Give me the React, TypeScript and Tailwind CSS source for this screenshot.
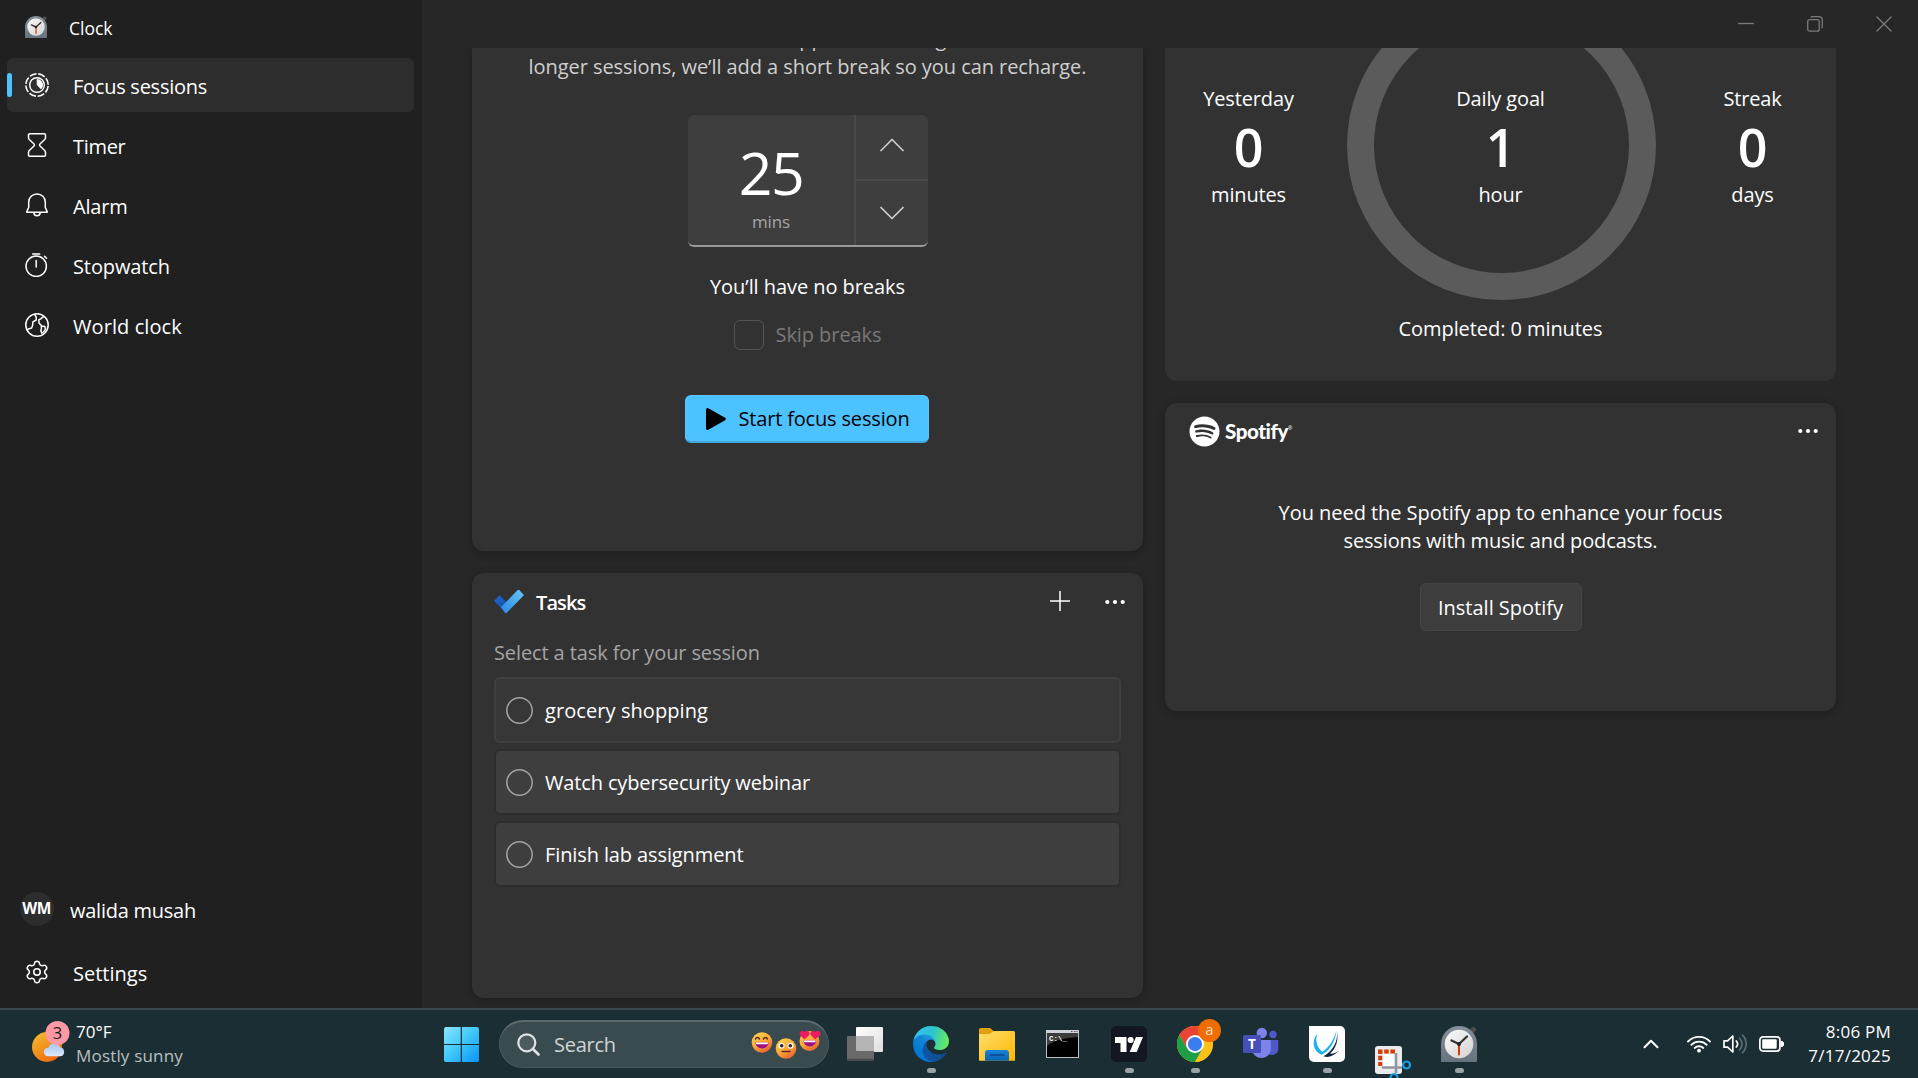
import React from 'react';
import { Settings, ChevronUp } from 'lucide-react';
import { FaSpotify } from 'react-icons/fa';

/* ---------- icons ---------- */

function ClockAppIcon({ size }: { size: number }) {
  return (
    <svg width={size} height={size} viewBox="0 0 36 36">
      <defs>
        <linearGradient id="clkBody" x1="0" y1="0" x2="0" y2="1">
          <stop offset="0" stopColor="#85909b" />
          <stop offset="1" stopColor="#66727d" />
        </linearGradient>
        <linearGradient id="clkFace" x1="0" y1="0" x2="1" y2="1">
          <stop offset="0" stopColor="#fafafa" />
          <stop offset="1" stopColor="#d2d2d2" />
        </linearGradient>
      </defs>
      <rect x="29.500" y="1" width="5" height="6" rx="1" transform="rotate(45 32 4)" fill="#4c4c4c" />
      <path d="M0 36V18a18 18 0 0 1 36 0v16.500a1.500 1.500 0 0 1-1.500 1.500z" fill="url(#clkBody)" />
      <circle cx="18" cy="18" r="14.300" fill="url(#clkFace)" />
      <path d="M18 18v10.500" stroke="#d83b01" strokeWidth="2" strokeLinecap="round" />
      <path d="M18 18l-7.500-3.500M18 18l8-7.500" stroke="#333" strokeWidth="2.300" strokeLinecap="round" />
      <circle cx="18" cy="18" r="2" fill="#222" />
    </svg>
  );
}

function FocusIcon() {
  return (
    <svg width="24" height="24" viewBox="0 0 24 24" fill="none" stroke="#fff">
      <circle cx="12" cy="12" r="11.200" strokeWidth="1.600" strokeDasharray="7 1.796" strokeDashoffset="-1" />
      <circle cx="12" cy="12" r="7.300" strokeWidth="1.400" />
      <path d="M12 6.300a5.700 5.700 0 0 1 4 9.800L12 12z" fill="#fff" strokeWidth="0.600" />
    </svg>
  );
}

function TimerIcon() {
  return (
    <svg width="24" height="24" viewBox="0 0 24 24" fill="none" stroke="#fff" strokeWidth="1.500" strokeLinejoin="round">
      <path d="M4.800.750h14.400a1.300 1.300 0 0 1 1.300 1.300v2.600c0 .8-.3 1.400-.8 1.900L15 11a1.400 1.400 0 0 0 0 2l4.700 4.500c.5.500.8 1.100.8 1.900V22a1.300 1.300 0 0 1-1.300 1.300H4.800A1.300 1.300 0 0 1 3.500 22v-2.600c0-.8.3-1.400.8-1.900L9 13a1.400 1.400 0 0 0 0-2L4.300 6.550c-.5-.5-.8-1.100-.8-1.900v-2.600A1.300 1.300 0 0 1 4.800.750z" />
    </svg>
  );
}

function AlarmIcon() {
  return (
    <svg width="24" height="24" viewBox="0 0 24 24" fill="none" stroke="#fff" strokeWidth="1.500" strokeLinejoin="round">
      <path d="M12 .9a8.300 8.300 0 0 0-8.300 8.300v5.300L1.800 18.600a.500.500 0 0 0 .4.700h19.600a.500.500 0 0 0 .4-.7l-1.900-4.100V9.200A8.300 8.300 0 0 0 12 .9z" />
      <path d="M8.800 19.500a3.200 3.200 0 0 0 6.400 0" />
    </svg>
  );
}

function StopwatchIcon() {
  return (
    <svg width="24" height="24" viewBox="0 0 24 24" fill="none" stroke="#fff" strokeWidth="1.500" strokeLinecap="round">
      <circle cx="11.200" cy="13.200" r="10.200" />
      <path d="M11.200 7.500v6.500M7.700 .9h7M19.500 3.300l2 2" />
    </svg>
  );
}

function WorldIcon() {
  return (
    <svg width="24" height="24" viewBox="0 0 24 24" fill="none" stroke="#fff" strokeWidth="1.500" strokeLinejoin="round">
      <circle cx="12" cy="12" r="11.200" />
      <path d="M9.500 1.200l1.700 2.800v3L7.900 8.900l-.3 3.600-1 2.500-3 .9-1.600 1.500" />
      <path d="M18.800 3.300L16 5.600l-2.200 1.400.2 3 2.300 2.500.2 3-.7 2.200 1 2.500 2.200-1.900 1.500-2.500-.7-2.300-2.500-.6" />
    </svg>
  );
}

function TodoIcon() {
  return (
    <svg width="30" height="25" viewBox="0 0 30 25">
      <defs>
        <linearGradient id="todoL" x1="0" y1="0" x2="1" y2="1">
          <stop offset="0" stopColor="#2564cf" />
          <stop offset="1" stopColor="#124fac" />
        </linearGradient>
        <linearGradient id="todoR" x1="0" y1="1" x2="1" y2="0">
          <stop offset="0" stopColor="#2987e6" />
          <stop offset="1" stopColor="#64c6f6" />
        </linearGradient>
      </defs>
      <path d="M.5 11.300L4.900 6.900a1 1 0 0 1 1.400 0l6 6-5.500 5.600L.5 12.500a.9.900 0 0 1 0-1.200z" fill="url(#todoL)" />
      <path d="M6.800 18.300L23.700 1a1.100 1.100 0 0 1 1.500 0l4.200 4.400a1 1 0 0 1 0 1.400L12.600 24a1 1 0 0 1-1.400 0z" fill="url(#todoR)" />
    </svg>
  );
}

function Dots() {
  return (
    <svg width="22" height="6" viewBox="0 0 22 6" fill="#fff">
      <circle cx="3.300" cy="3" r="2.100" />
      <circle cx="11" cy="3" r="2.100" />
      <circle cx="18.700" cy="3" r="2.100" />
    </svg>
  );
}

function TaskCircle() {
  return (
    <svg width="27" height="27" viewBox="0 0 27 27">
      <circle cx="13.500" cy="13.500" r="12.700" fill="none" stroke="#a3a3a3" strokeWidth="1.500" />
    </svg>
  );
}

function EdgeIcon() {
  return (
    <svg width="36" height="36" viewBox="0 0 256 256">
      <defs>
        <linearGradient id="edA" x1="63" y1="177" x2="242" y2="177" gradientUnits="userSpaceOnUse">
          <stop offset="0" stopColor="#0c59a4" />
          <stop offset="1" stopColor="#114a8b" />
        </linearGradient>
        <linearGradient id="edB" x1="157" y1="100" x2="46" y2="221" gradientUnits="userSpaceOnUse">
          <stop offset="0" stopColor="#1b9de2" />
          <stop offset=".35" stopColor="#1384d9" />
          <stop offset="1" stopColor="#0078d4" />
        </linearGradient>
        <linearGradient id="edC" x1="20" y1="50" x2="250" y2="110" gradientUnits="userSpaceOnUse">
          <stop offset="0" stopColor="#35c1f1" />
          <stop offset=".5" stopColor="#2cc4cf" />
          <stop offset="1" stopColor="#66eb5e" />
        </linearGradient>
      </defs>
      <g transform="translate(-4.630 -4.920)">
        <path fill="url(#edA)" d="M235.680 195.460a93.730 93.730 0 0 1-10.540 4.710 101.870 101.870 0 0 1-35.900 6.460c-47.320 0-88.540-32.550-88.540-74.320A31.480 31.480 0 0 1 117.130 105c-42.800 1.800-53.800 46.400-53.800 72.530 0 73.880 68.090 81.370 82.760 81.370 7.910 0 19.840-2.300 27-4.560l1.310-.44a128.340 128.340 0 0 0 66.600-52.800 4 4 0 0 0-5.320-5.640z" />
        <path fill="url(#edB)" d="M110.340 246.340A79.200 79.200 0 0 1 87.600 225a80.720 80.720 0 0 1 29.530-120c3.120-1.470 8.450-4.130 15.540-4a32.350 32.350 0 0 1 25.690 13 31.880 31.880 0 0 1 6.360 18.660c0-.21 24.460-79.600-80-79.600-43.900 0-80 41.660-80 78.210a130.150 130.150 0 0 0 12.110 56 128 128 0 0 0 156.380 67.110 75.550 75.550 0 0 1-62.780-8z" />
        <path fill="url(#edC)" d="M156.940 153.780c-.81 1.050-3.300 2.500-3.300 5.660 0 2.610 1.700 5.120 4.720 7.230 14.380 10 41.490 8.680 41.560 8.680a59.560 59.560 0 0 0 30.270-8.350 61.380 61.380 0 0 0 30.430-52.880c.26-22.410-8-37.310-11.340-43.910C228.090 28.760 182.350 4.920 132.610 4.920a128 128 0 0 0-128 126.200c.48-36.540 36.800-66.050 80-66.050 3.500 0 23.460.34 42 10.070 16.340 8.580 24.900 18.940 30.850 29.210 6.180 10.670 7.280 24.150 7.280 29.520s-2.740 13.330-7.800 19.910z" />
      </g>
    </svg>
  );
}

function TaskViewIcon() {
  return (
    <svg width="36" height="36" viewBox="0 0 36 36">
      <defs>
        <linearGradient id="tvW" x1="0" y1="0" x2="1" y2="1">
          <stop offset="0" stopColor="#fff" />
          <stop offset="1" stopColor="#dedede" />
        </linearGradient>
      </defs>
      <rect x="9" y="1" width="27" height="25" rx="1" fill="url(#tvW)" />
      <rect x="0" y="10" width="27" height="24.500" rx="1" fill="#6a6a6a" />
      <path d="M9 10h18v15H10a1 1 0 0 1-1-1z" fill="#b4b4b4" />
      <path d="M0 33.500h27" stroke="#4d4d4d" strokeWidth="1.500" />
    </svg>
  );
}

function FolderIcon() {
  return (
    <svg width="36" height="36" viewBox="0 0 36 36">
      <defs>
        <linearGradient id="fo" x1="0" y1="0" x2="1" y2="1">
          <stop offset="0" stopColor="#ffdc70" />
          <stop offset="1" stopColor="#ffb900" />
        </linearGradient>
        <linearGradient id="fb" x1="0" y1="0" x2="0" y2="1">
          <stop offset="0" stopColor="#1585dc" />
          <stop offset="1" stopColor="#0b62b0" />
        </linearGradient>
      </defs>
      <path d="M0 3.500A1.500 1.500 0 0 1 1.500 2h9.700l4 3.500L12 10H0z" fill="#e2a10b" />
      <path d="M0 8h10.500l4.500-3h19.500A1.500 1.500 0 0 1 36 6.500V34.700H0z" fill="url(#fo)" />
      <path d="M6 34.700V27a3 3 0 0 1 3-3h18a3 3 0 0 1 3 3v7.700z" fill="url(#fb)" />
      <path d="M11 29h14" stroke="#0a4a8c" strokeWidth="1.300" strokeLinecap="round" />
    </svg>
  );
}

function CmdIcon() {
  return (
    <svg width="33" height="28" viewBox="0 0 33 28">
      <rect x=".5" y=".5" width="32" height="27" fill="#000" stroke="#b9bcc1" />
      <rect x="0" y="0" width="33" height="3" fill="#cfd2d8" />
      <path d="M1 3h31v4C18 8 8 10 1 16z" fill="#3c3c3c" />
      <path d="M25 1.500h1.500M28 1.500h1.500M30.500 1.500h1" stroke="#556" strokeWidth="1" />
      <text x="3" y="10.500" fontSize="7.500" fontFamily="Liberation Mono, monospace" fontWeight="700" fill="#fff">C:\_</text>
    </svg>
  );
}

function TradingIcon() {
  return (
    <svg width="36" height="36" viewBox="0 0 36 36">
      <rect width="36" height="36" rx="5.500" fill="#131722" />
      <path d="M4 11h11.500v15h-6v-9H4z" fill="#fff" />
      <circle cx="19.600" cy="14" r="3" fill="#fff" />
      <path d="M25 11h7l-6.300 15h-7z" fill="#fff" />
    </svg>
  );
}

function ChromeIcon() {
  return (
    <svg width="36" height="36" viewBox="0 0 48 48">
      <circle cx="24" cy="24" r="24" fill="#fbc116" />
      <path d="M24 24L44.780 12A24 24 0 0 0 3.220 12L13.600 30z" fill="#ea4335" />
      <path d="M3.220 12A24 24 0 0 0 24 48L34.400 30H13.600z" fill="#1e9e47" />
      <path d="M24 13h21.300A24 24 0 0 1 24 48l10.400-18z" fill="#fbc116" />
      <circle cx="24" cy="24" r="12" fill="#fff" />
      <circle cx="24" cy="24" r="9.500" fill="#3b7ded" />
    </svg>
  );
}

function TeamsIcon() {
  return (
    <svg width="36" height="36" viewBox="0 0 36 36">
      <circle cx="30" cy="8.500" r="3.700" fill="#5059c9" />
      <path d="M24 14h10.300a1 1 0 0 1 1 1v8a6.300 6.300 0 0 1-11.300 3.500z" fill="#5059c9" />
      <circle cx="18.800" cy="7" r="5.200" fill="#7b83eb" />
      <path d="M10.500 14h16a1.300 1.300 0 0 1 1.300 1.300V24.500a9.500 9.500 0 0 1-18.600 0V15.300z" fill="#7b83eb" />
      <rect x="0" y="9" width="18" height="18" rx="1.500" fill="#464eb8" />
      <text x="9" y="22.500" textAnchor="middle" fontSize="13.500" fontWeight="700" fontFamily="Open Sans, sans-serif" fill="#fff">T</text>
    </svg>
  );
}

function SwooshIcon() {
  return (
    <svg width="36" height="36" viewBox="0 0 36 36">
      <path d="M0 0h31a5 5 0 0 1 5 5v26a5 5 0 0 1-5 5H5a5 5 0 0 1-5-5z" fill="#fff" />
      <path d="M8.300 7.500C2.500 14.500 3.500 25 12.500 28.700 19.500 26 26.500 16 27.500 4.500 24.500 14.500 19.500 22 13.300 25.800 7.800 21.500 6 14.500 8.300 7.500z" fill="#19b1ee" />
      <path d="M28 6c1 8.500-3.500 18.500-13.500 24.300 4.500 1.700 10.500 0 15.500-5.800-3.500 2.700-6.500 3.500-9 3C27 22.500 29.700 14 28 6z" fill="#12284b" />
    </svg>
  );
}

function SnipIcon() {
  return (
    <svg width="36" height="36" viewBox="0 0 36 36">
      <rect x="0" y="0" width="27" height="28" rx="3" fill="#e9ebee" />
      <path d="M3 5.500h17M5.200 3.500V20" stroke="#d83b01" strokeWidth="4" strokeDasharray="4.500 1.700" />
      <rect x="8" y="8.500" width="13" height="12.500" fill="#fff" />
      <path d="M21 7v20M7 21.500h20" stroke="#8f969e" strokeWidth="2.600" />
      <circle cx="31.500" cy="19" r="3.500" fill="none" stroke="#1b9de2" strokeWidth="2.200" />
      <circle cx="19" cy="31.500" r="3.500" fill="none" stroke="#1b9de2" strokeWidth="2.200" />
    </svg>
  );
}

function WindowsIcon() {
  return (
    <svg width="35" height="35" viewBox="0 0 35 35">
      <defs>
        <linearGradient id="wn" x1="0" y1="0" x2="1" y2="1">
          <stop offset="0" stopColor="#8fe4ff" />
          <stop offset=".45" stopColor="#43cbfb" />
          <stop offset="1" stopColor="#0a93f5" />
        </linearGradient>
        <mask id="wnm">
          <rect width="35" height="35" rx="1.500" fill="#fff" />
          <path d="M17.300 0v35M0 17.500h35" stroke="#000" strokeWidth="1.200" />
        </mask>
      </defs>
      <rect width="35" height="35" rx="1.500" fill="url(#wn)" mask="url(#wnm)" />
    </svg>
  );
}

function WeatherIcon() {
  return (
    <svg width="38" height="42" viewBox="0 0 38 42">
      <defs>
        <linearGradient id="sun" x1="0" y1="0" x2=".7" y2="1">
          <stop offset="0" stopColor="#f5c231" />
          <stop offset="1" stopColor="#f0680e" />
        </linearGradient>
        <linearGradient id="cl" x1="0" y1="0" x2="0" y2="1">
          <stop offset="0" stopColor="#a9c5f5" />
          <stop offset="1" stopColor="#dbe7fb" />
        </linearGradient>
      </defs>
      <circle cx="15" cy="26" r="15" fill="url(#sun)" />
      <path d="M16 35.300a4.300 4.300 0 0 1 .3-8.600 6.300 6.300 0 0 1 11.700-.4 4.600 4.600 0 0 1 .8 9z" fill="url(#cl)" />
      <circle cx="25.500" cy="12" r="12" fill="#ff99a4" />
      <text x="25.500" y="17.500" textAnchor="middle" fontSize="16.500" fontFamily="Open Sans, sans-serif" fill="#1a1a1a">3</text>
    </svg>
  );
}

function Emojis() {
  return (
    <svg width="70" height="30" viewBox="0 0 70 30">
      <defs>
        <linearGradient id="emo" x1="0" y1="0" x2=".6" y2="1">
          <stop offset="0" stopColor="#ffd84a" />
          <stop offset=".6" stopColor="#fba638" />
          <stop offset="1" stopColor="#e8682f" />
        </linearGradient>
      </defs>
      <circle cx="11" cy="12.500" r="10.300" fill="url(#emo)" />
      <path d="M4.500 9c.7-2 3.300-2 4 0M12.500 9c.7-2 3.300-2 4 0" fill="none" stroke="#5b2b23" strokeWidth="1.500" strokeLinecap="round" />
      <path d="M4.500 12.500h13a6.500 6 0 0 1-13 0z" fill="#9c0f86" />
      <path d="M5 12.500h12v1a1 1 0 0 1-1 .7H6a1 1 0 0 1-1-.7z" fill="#fff" />
      <circle cx="35" cy="18.500" r="10.300" fill="url(#emo)" />
      <circle cx="30.500" cy="15.700" r="3" fill="#fff" />
      <circle cx="39.500" cy="15.700" r="3" fill="#fff" />
      <circle cx="30.700" cy="15.800" r="1.800" fill="#3b2020" />
      <circle cx="39.300" cy="15.800" r="1.800" fill="#3b2020" />
      <path d="M31 21.500h8" stroke="#5b2b23" strokeWidth="1.400" strokeLinecap="round" />
      <circle cx="58.500" cy="11" r="10" fill="url(#emo)" />
      <path d="M52.500 10.500h12.500a6.200 6 0 0 1-12.500 0z" fill="#9c0f86" />
      <path d="M53 10.500h11.500v1a1 1 0 0 1-1 .7H54a1 1 0 0 1-1-.7z" fill="#fff" />
      <path d="M53.500 9.500l-4.200-4a2.700 2.700 0 0 1 3.300-4.200l1 .7.900-.8a2.700 2.700 0 0 1 3.500 4z" fill="#ee1c63" />
      <path d="M64 9.500l-4-4.300a2.700 2.700 0 0 1 3.500-4l.9.800 1-.7a2.700 2.700 0 0 1 3.300 4.200z" fill="#ee1c63" />
    </svg>
  );
}

/* ---------- pieces ---------- */

const NAV = [
  { label: 'Focus sessions', icon: <FocusIcon />, active: true, tracking: 'tracking-[-0.260px]' },
  { label: 'Timer', icon: <TimerIcon />, active: false, tracking: 'tracking-[-0.300px]' },
  { label: 'Alarm', icon: <AlarmIcon />, active: false, tracking: 'tracking-[-0.200px]' },
  { label: 'Stopwatch', icon: <StopwatchIcon />, active: false, tracking: 'tracking-[-0.110px]' },
  { label: 'World clock', icon: <WorldIcon />, active: false, tracking: 'tracking-[0.080px]' },
];

function Sidebar() {
  return (
    <aside className="flex w-[422px] shrink-0 flex-col bg-[#202020]">
      <header className="flex h-[54px] items-center gap-[22px] pl-[25px]">
        <ClockAppIcon size={22} />
        <span className="pt-[1px] text-[17.500px] leading-6">Clock</span>
      </header>
      <nav className="mt-1 flex flex-col gap-1.5 pr-2 pl-[7px]">
        {NAV.map((n) => (
          <div key={n.label} className={n.active ? 'flex h-[54px] items-center rounded-md bg-[#2d2d2d]' : 'flex h-[54px] items-center'}>
            <span className={n.active ? 'h-6 w-[5px] rounded-full bg-[#4cc2ff]' : 'w-[5px]'} />
            <span className="ml-[13px]">{n.icon}</span>
            <span className={`${n.tracking} ml-6 pt-[3px] leading-7`}>{n.label}</span>
          </div>
        ))}
      </nav>
      <div className="mt-auto flex h-[54px] items-center pl-5">
        <span className="flex size-[34px] items-center justify-center rounded-full bg-[#2d2d2d] pr-[1px] text-[15.500px] font-bold tracking-[-0.600px]">WM</span>
        <span className="ml-4 pt-[3px] leading-7 tracking-[-0.250px]">walida musah</span>
      </div>
      <div className="mt-[9px] mb-[9px] flex h-[54px] items-center pl-6">
        <Settings size={26} strokeWidth={1.400} />
        <span className="ml-[23px] pt-[3px] leading-7">Settings</span>
      </div>
    </aside>
  );
}

function FocusCard() {
  return (
    <section className="flex h-[503px] flex-col items-center overflow-hidden rounded-b-xl bg-[#323232] shadow-[0_2px_8px_rgba(0,0,0,0.250)]">
      <p className="mt-[-23px] text-center leading-7 tracking-[-0.060px] whitespace-nowrap text-[#cfcfcf]">
        We’ll turn off notifications and app alerts during each session. For
        <br />
        longer sessions, we’ll add a short break so you can recharge.
      </p>
      <div className="mt-[34px] flex h-[132px] w-60 shrink-0 overflow-hidden rounded-md border-b-2 border-[#9a9a9a] bg-[#3e3e3e]">
        <div className="flex w-[166px] flex-col items-center pt-[25px] pl-[1px]">
          <span className="text-[59px] leading-[64px] tracking-[-1.500px]">25</span>
          <span className="mt-[6px] text-[17px] leading-6 tracking-[-0.140px] text-[#a6a6a6]">mins</span>
        </div>
        <div className="flex flex-1 flex-col border-l-2 border-[#4a4a4a]">
          <div className="flex h-[66px] items-center justify-center border-b-2 border-[#4a4a4a] pb-[4px]">
            <svg width="24" height="14" viewBox="0 0 24 14" fill="none" stroke="#cfcfcf" strokeWidth="1.700" strokeLinecap="round" strokeLinejoin="round">
              <path d="M1 12.500L12 1.500l11 11" />
            </svg>
          </div>
          <div className="flex flex-1 items-center justify-center">
            <svg width="24" height="14" viewBox="0 0 24 14" fill="none" stroke="#cfcfcf" strokeWidth="1.700" strokeLinecap="round" strokeLinejoin="round">
              <path d="M1 1.500l11 11 11-11" />
            </svg>
          </div>
        </div>
      </div>
      <div className="mt-[26px] leading-7 tracking-[-0.060px]">You’ll have no breaks</div>
      <label className="mt-[19px] flex h-[30px] items-center gap-3 text-[#797979]">
        <span className="size-[30px] rounded-md border border-[#545454]" />
        <span className="leading-7 tracking-[-0.070px]">Skip breaks</span>
      </label>
      <button className="mt-[45px] mr-[2px] flex h-12 w-[244px] shrink-0 items-center rounded-md border border-b-2 border-[#5ac7ff] border-b-[#42a7dc] bg-[#4cc2ff] pl-5 text-black">
        <svg width="20" height="22" viewBox="0 0 20 22">
          <path d="M0 1.500A1.500 1.500 0 0 1 2.300.3l16.800 9.400a1.500 1.500 0 0 1 0 2.600L2.300 21.700A1.500 1.500 0 0 1 0 20.500z" />
        </svg>
        <span className="ml-[13px] leading-7 tracking-[-0.170px]">Start focus session</span>
      </button>
    </section>
  );
}

const TASKS = [
  { title: 'Watch cybersecurity webinar', tracking: 'tracking-[-0.140px]' },
  { title: 'Finish lab assignment', tracking: 'tracking-[-0.110px]' },
];

function TasksCard() {
  return (
    <section className="mt-[22px] h-[425px] rounded-xl bg-[#323232] pt-[11px] pr-[17px] pl-[22px] shadow-[0_2px_8px_rgba(0,0,0,0.250)]">
      <header className="flex h-[34px] items-center">
        <TodoIcon />
        <span className="ml-3 pt-[3px] font-semibold leading-7 tracking-[-0.900px]">Tasks</span>
        <svg className="ml-auto" width="20" height="20" viewBox="0 0 20 20" stroke="#fff" strokeWidth="1.500">
          <path d="M10 0v20M0 10h20" />
        </svg>
        <span className="ml-[34px] pt-[1px]">
          <Dots />
        </span>
      </header>
      <p className="mt-[21px] leading-7 tracking-[-0.110px] text-[#a4a4a4]">Select a task for your session</p>
      <div className="mt-[10px] mr-[5px] flex h-[66px] items-center rounded-md border-2 border-[#3f3f3f] bg-[#373737] pl-[10px]">
        <TaskCircle />
        <span className="ml-3 pt-[1px] leading-7 tracking-[0.080px]">grocery shopping</span>
      </div>
      <div className="mt-2 mr-[7px] ml-[2px] flex flex-col gap-[10px]">
        {TASKS.map((t) => (
          <div key={t.title} className="flex h-[62px] items-center rounded bg-[#3e3e3e] pl-[10px] shadow-[0_0_0_2px_rgba(0,0,0,0.090)]">
            <TaskCircle />
            <span className={`${t.tracking} ml-3 pt-[1px] leading-7`}>{t.title}</span>
          </div>
        ))}
      </div>
    </section>
  );
}

function Stat({ top, value, unit }: { top: string; value: string; unit: string }) {
  return (
    <div className="relative flex w-[167px] flex-col items-center">
      <span className="leading-7 tracking-[-0.150px]">{top}</span>
      <span className="mt-1.5 text-[52px] leading-[56px] font-semibold">{value}</span>
      <span className="mt-1.5 leading-7 tracking-[-0.150px]">{unit}</span>
    </div>
  );
}

function ProgressCard() {
  return (
    <section className="relative h-[333px] overflow-hidden rounded-b-xl bg-[#323232] pt-[37px]">
      <svg className="absolute top-[-57px] left-[182px]" width="309" height="309" viewBox="0 0 309 309">
        <circle cx="154.500" cy="154.500" r="141" fill="none" stroke="#5b5b5b" strokeWidth="27" />
      </svg>
      <div className="flex justify-between">
        <Stat top="Yesterday" value="0" unit="minutes" />
        <Stat top="Daily goal" value="1" unit="hour" />
        <Stat top="Streak" value="0" unit="days" />
      </div>
      <div className="mt-[106px] text-center leading-7 tracking-[-0.070px]">Completed: 0 minutes</div>
    </section>
  );
}

function SpotifyCard() {
  return (
    <section className="mt-[22px] flex h-[308px] flex-col items-center rounded-xl bg-[#323232] shadow-[0_2px_8px_rgba(0,0,0,0.250)]">
      <header className="flex h-14 w-full items-center pr-[17px] pl-6">
        <FaSpotify size={31} />
        <span className="ml-[5px] font-['Lato'] text-[20.500px] leading-7 font-black tracking-[-0.400px]">Spotify</span>
        <span className="mb-1 text-[5px]">®</span>
        <span className="ml-auto">
          <Dots />
        </span>
      </header>
      <p className="mt-10 text-center leading-7 tracking-[-0.050px]">
        You need the Spotify app to enhance your focus
        <br />
        <span className="tracking-[-0.140px]">sessions with music and podcasts.</span>
      </p>
      <button className="mt-[28px] flex h-12 w-[162px] items-center justify-center rounded-md border border-[#454545] bg-[#3e3e3e] pt-[1px] leading-7">Install Spotify</button>
    </section>
  );
}

function TaskbarItem({ children, running, badge }: { children: React.ReactNode; running?: boolean; badge?: string }) {
  return (
    <div className="relative flex h-[68px] w-[66px] items-center justify-center">
      {children}
      {badge && (
        <span className="absolute top-[9px] right-[7px] flex size-[23px] items-center justify-center rounded-full bg-[#ee6c00] pb-[2px] text-[15px] leading-none text-[#ffe0c4]">{badge}</span>
      )}
      {running && <span className="absolute bottom-[5px] left-[29px] h-[5px] w-[9px] rounded-full bg-[#9aa3a5]" />}
    </div>
  );
}

function Taskbar() {
  return (
    <footer className="flex h-[70px] items-center overflow-hidden border-t-2 border-[#39494d] bg-[#1b2e33]">
      <div className="flex w-[444px] items-center pl-8">
        <span className="mb-[5px]">
          <WeatherIcon />
        </span>
        <div className="ml-[6px] flex flex-col text-[17px] leading-6">
          <span>70°F</span>
          <span className="tracking-[0.180px] text-[#b8c0c1]">Mostly sunny</span>
        </div>
      </div>
      <WindowsIcon />
      <div className="ml-5 flex h-12 w-[330px] items-center rounded-full border border-t-2 border-[#4b5b5f] border-t-[#5c6a6e] bg-[#3a4b50] pr-[7px] pl-[17px]">
        <svg width="23" height="23" viewBox="0 0 23 23" fill="none" stroke="#dfe3e4" strokeLinecap="round">
          <circle cx="9.800" cy="9.800" r="8.500" strokeWidth="2.200" fill="#4c5b5f" />
          <path d="M16 16l5.500 5.500" strokeWidth="2.600" />
        </svg>
        <span className="ml-[14px] leading-7 tracking-[-0.250px] text-[#cfd5d6]">Search</span>
        <span className="ml-auto">
          <Emojis />
        </span>
      </div>
      <div className="ml-[3px] flex">
        <TaskbarItem><TaskViewIcon /></TaskbarItem>
        <TaskbarItem running><EdgeIcon /></TaskbarItem>
        <TaskbarItem><FolderIcon /></TaskbarItem>
        <TaskbarItem><span className="pr-[2px]"><CmdIcon /></span></TaskbarItem>
        <TaskbarItem running><TradingIcon /></TaskbarItem>
        <TaskbarItem running badge="a"><ChromeIcon /></TaskbarItem>
        <TaskbarItem><TeamsIcon /></TaskbarItem>
        <TaskbarItem running><SwooshIcon /></TaskbarItem>
        <TaskbarItem><span className="pt-10"><SnipIcon /></span></TaskbarItem>
        <TaskbarItem running><ClockAppIcon size={36} /></TaskbarItem>
      </div>
      <div className="ml-auto flex items-center pr-[27px]">
        <ChevronUp size={26} strokeWidth={1.900} />
        <svg className="ml-[23px]" width="24" height="18" viewBox="0 0 24 18" fill="none" stroke="#fff" strokeWidth="1.800" strokeLinecap="round">
          <path d="M1 6.500a15.500 15.500 0 0 1 22 0M4.300 9.800a11 11 0 0 1 15.400 0M7.700 13a6.200 6.200 0 0 1 8.600 0" />
          <circle cx="12" cy="15.700" r="1.900" fill="#fff" stroke="none" />
        </svg>
        <svg className="ml-3" width="24" height="20" viewBox="0 0 24 20" fill="none" stroke="#fff" strokeWidth="1.700" strokeLinecap="round" strokeLinejoin="round">
          <path d="M1 6.800h3.600L9.800 2v16l-5.200-4.800H1zM13.300 7a4.500 4.500 0 0 1 0 6" />
          <path d="M16.500 4a8.500 8.500 0 0 1 0 12M19.500 1.200a12.500 12.500 0 0 1 0 17.600" stroke="#5d6d71" />
        </svg>
        <svg className="ml-3" width="25" height="16" viewBox="0 0 25 16">
          <rect x=".9" y=".9" width="20" height="14.200" rx="3" fill="none" stroke="#fff" strokeWidth="1.700" />
          <rect x="3.200" y="3.200" width="14.500" height="9.600" rx="1" fill="#fff" />
          <path d="M22 5.300a2.700 2.700 0 0 1 0 5.400z" fill="#fff" stroke="#fff" />
        </svg>
        <div className="ml-6 flex flex-col items-end text-[17px] leading-6 tracking-[0.240px]">
          <span>8:06 PM</span>
          <span>7/17/2025</span>
        </div>
      </div>
    </footer>
  );
}

export default function App() {
  return (
    <div className="flex h-[1078px] w-[1918px] flex-col overflow-hidden bg-[#272727] font-['Open_Sans','Noto_Sans',sans-serif] text-[20px] text-white">
      <div className="flex h-[1008px]">
        <Sidebar />
        <main className="flex flex-1 flex-col">
          <div className="flex h-12 items-center justify-end gap-[53px] pr-[26px]">
            <svg width="16" height="16" viewBox="0 0 16 16" stroke="#7b7b7b" strokeWidth="1.300">
              <path d="M0 7.500h16" />
            </svg>
            <svg width="16" height="16" viewBox="0 0 16 16" fill="none" stroke="#7b7b7b" strokeWidth="1.300">
              <rect x=".7" y="3.700" width="11.500" height="11.500" rx="2" />
              <path d="M3.800 1.500C4.200 1 4.800.7 5.500.7H12a3.300 3.300 0 0 1 3.300 3.300v6.500c0 .7-.3 1.300-.8 1.700" />
            </svg>
            <svg width="16" height="16" viewBox="0 0 16 16" stroke="#7b7b7b" strokeWidth="1.300">
              <path d="M.5.5l15 15M15.500.5l-15 15" />
            </svg>
          </div>
          <div className="flex h-[960px] gap-[22px] overflow-hidden pl-[50px]">
            <div className="w-[671px]">
              <FocusCard />
              <TasksCard />
            </div>
            <div className="w-[671px]">
              <ProgressCard />
              <SpotifyCard />
            </div>
          </div>
        </main>
      </div>
      <Taskbar />
    </div>
  );
}
